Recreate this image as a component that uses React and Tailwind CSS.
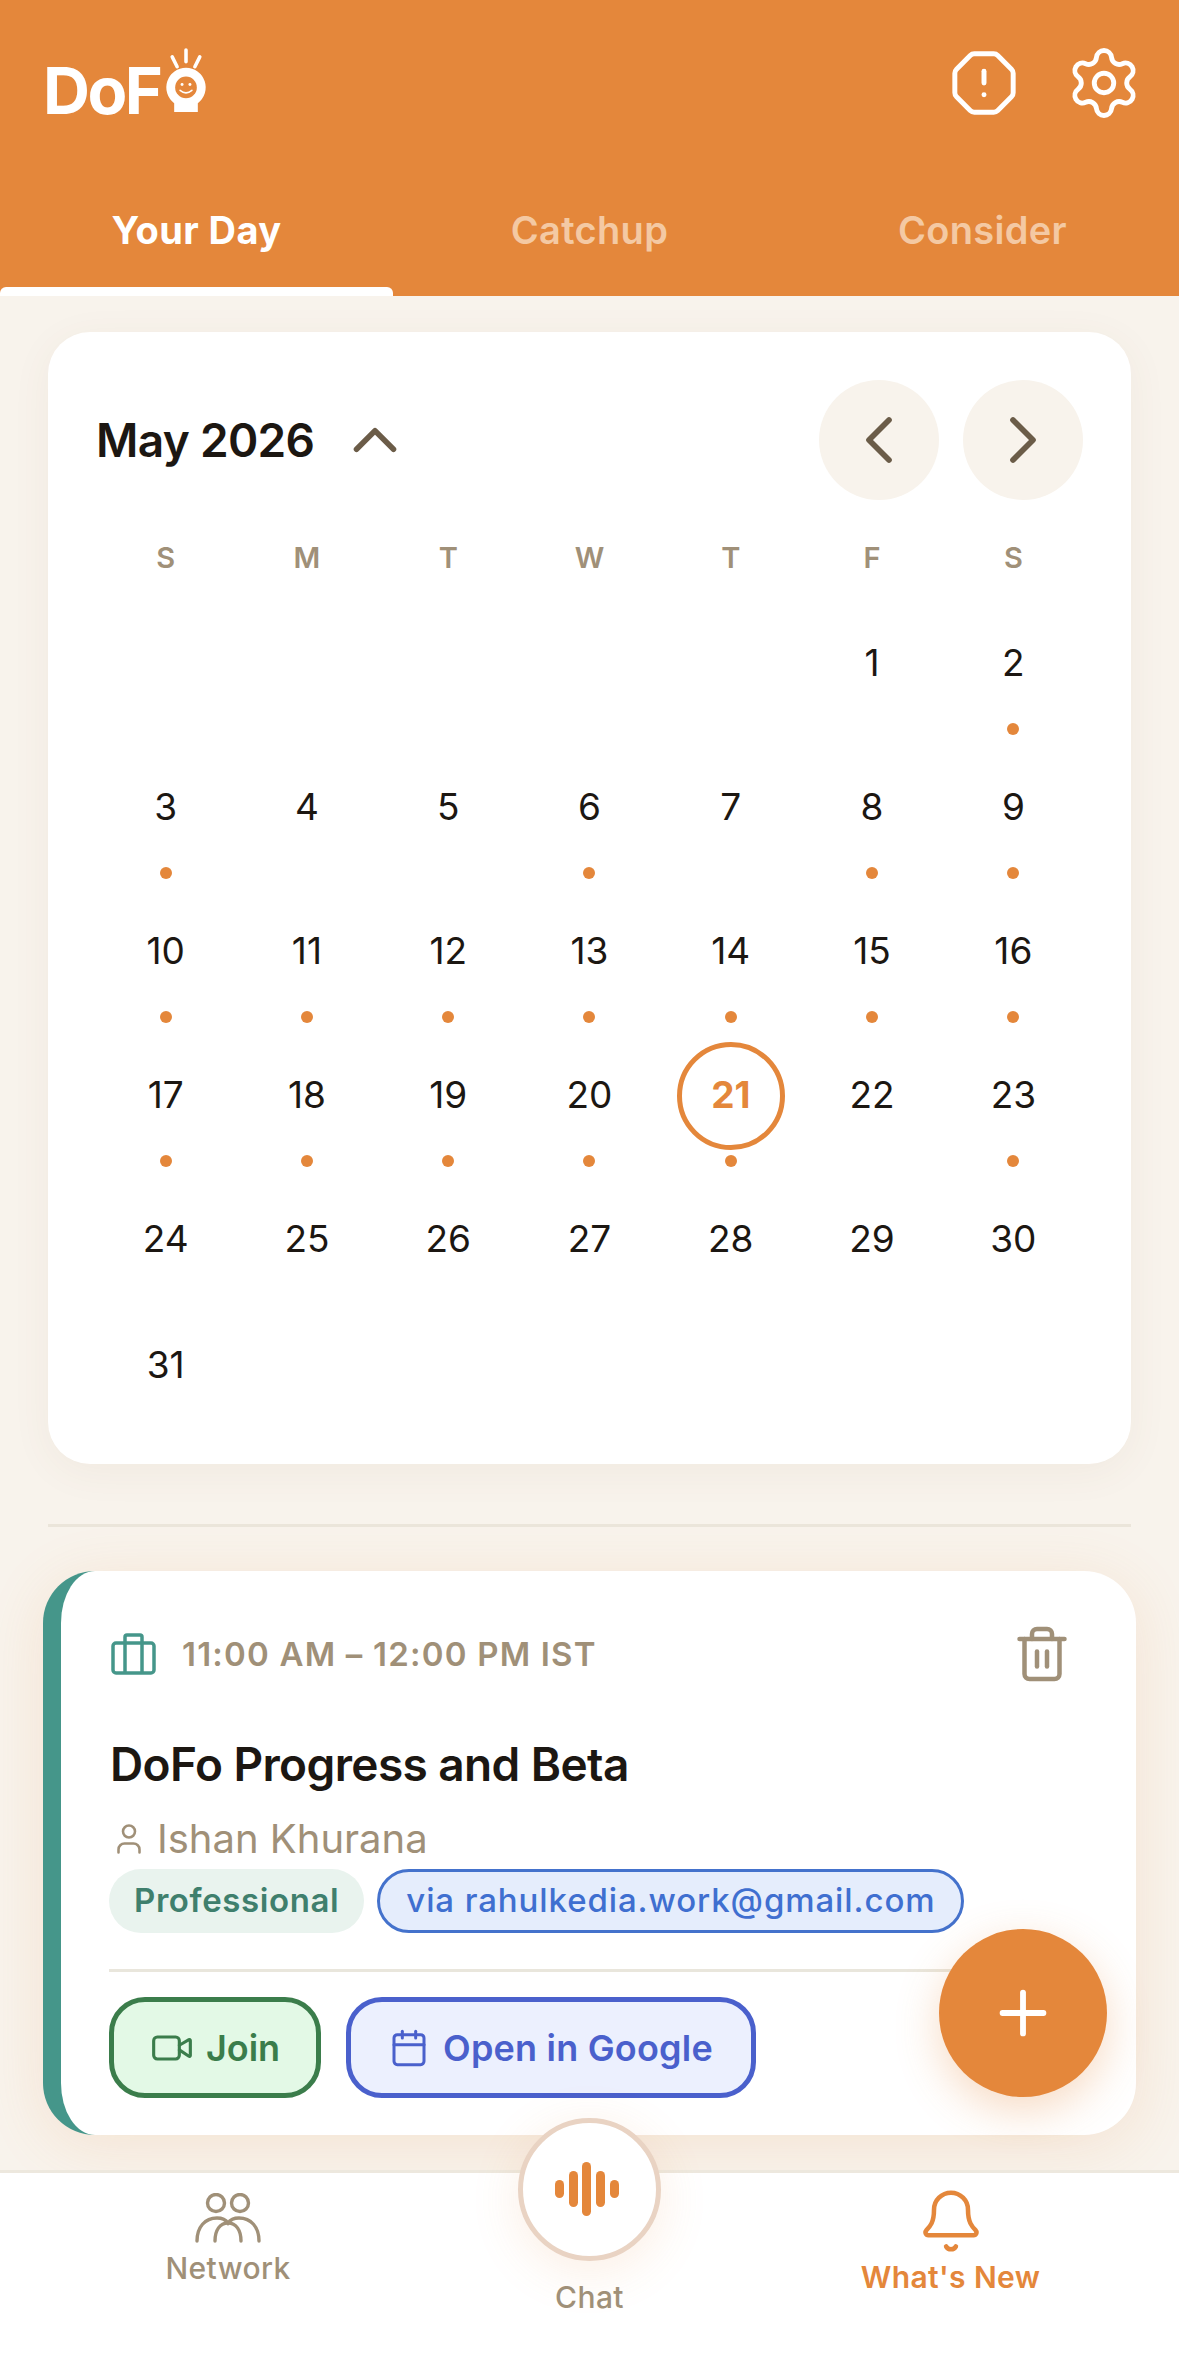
import { Bell, Calendar, ChevronLeft, ChevronRight, ChevronUp, OctagonAlert, Plus, Settings, Trash2, User, Video } from "lucide-react";

const days = [
  [null, null, null, null, null, 1, 2],
  [3, 4, 5, 6, 7, 8, 9],
  [10, 11, 12, 13, 14, 15, 16],
  [17, 18, 19, 20, 21, 22, 23],
];
const lastRows = [[24, 25, 26, 27, 28, 29, 30], [31, null, null, null, null, null, null]];
const noDot = [1, 4, 5, 7, 22];

function Logo() {
  return (
    <div className="flex items-end h-[66px]">
      <span className="text-[65px] leading-[60px] font-bold text-white tracking-[-2.5px] -mb-[5px] -ml-[1px] font-['Inter',sans-serif]">DoF</span>
      <svg width="48" height="65" viewBox="0 0 46 66" className="ml-[2px] mb-[3px]">
        <path d="M23 2v12M9 9l5 10M37 9l-5 10" stroke="#fff" strokeWidth="3.6" strokeLinecap="round" />
        <path d="M23 20a20 20 0 0 1 12 36v9H11v-9a20 20 0 0 1 12-36z" fill="#fff" />
        <circle cx="23" cy="40" r="11" fill="#e4873b" />
        <circle cx="19" cy="37" r="1.5" fill="#fff" />
        <circle cx="27" cy="37" r="1.5" fill="#fff" />
        <path d="M17 43q6 5 12 0" stroke="#fff" strokeWidth="1.6" fill="none" strokeLinecap="round" />
      </svg>
    </div>
  );
}

function Header() {
  return (
    <header className="bg-[#e4873b] h-[296px] shrink-0 flex flex-col">
      <div className="flex items-center justify-between pl-[44px] pr-[42px] pt-[42px] h-[170px] pb-[46px]">
        <Logo />
        <div className="flex items-center gap-[46px]">
          <OctagonAlert size={70} color="#fff" strokeWidth={1.7} />
          <Settings size={78} color="#fff" strokeWidth={1.5} className="-mr-[6px]" />
        </div>
      </div>
      <div className="grid grid-cols-3 flex-1">
        <div className="relative flex justify-center pt-[36px] text-[38px] leading-[48px] font-bold tracking-[0.4px] text-white">
          Your Day
          <div className="absolute left-0 right-0 bottom-0 h-[9px] bg-white rounded-t-[6px]" />
        </div>
        <div className="flex justify-center pt-[36px] text-[38px] leading-[48px] font-semibold tracking-[0.3px] text-[#f4c9a3]">Catchup</div>
        <div className="flex justify-center pt-[36px] text-[38px] leading-[48px] font-semibold tracking-[0.3px] text-[#f4c9a3]">Consider</div>
      </div>
    </header>
  );
}

function DayCell({ day }) {
  if (!day) return <div />;
  const today = day === 21;
  return (
    <div className="relative flex flex-col items-center">
      {today ? (
        <div className="absolute top-[-4px] w-[108px] h-[108px] rounded-full border-[5px] border-[#e4873b]" />
      ) : null}
      <div className={`h-[50px] leading-[50px] mt-[24px] text-[37px] ${today ? "font-bold text-[#e4873b]" : "text-[#1c1712]"}`}>{day}</div>
      {day < 24 && !noDot.includes(day) ? <div className="w-[12px] h-[12px] rounded-full bg-[#e4873b] mt-[35px]" /> : null}
    </div>
  );
}

function CalendarCard() {
  return (
    <section className="bg-white rounded-[42px] px-[47px] pt-[48px] h-[1132px] shadow-[0_8px_40px_rgba(120,90,50,0.06)]">
      <div className="flex items-center justify-between">
        <div className="flex items-center gap-[24px]">
          <span className="text-[46px] font-semibold tracking-[-0.7px] text-[#1c1712] leading-[56px] ml-[1px]">May 2026</span>
          <ChevronUp size={74} color="#6b5c48" strokeWidth={1.8} />
        </div>
        <div className="flex gap-[24px] mr-[1px]">
          <div className="w-[120px] h-[120px] rounded-full bg-[#f8f3ec] flex items-center justify-center">
            <ChevronLeft size={80} color="#6b5c48" strokeWidth={1.7} />
          </div>
          <div className="w-[120px] h-[120px] rounded-full bg-[#f8f3ec] flex items-center justify-center">
            <ChevronRight size={80} color="#6b5c48" strokeWidth={1.7} />
          </div>
        </div>
      </div>
      <div className="grid grid-cols-7 mt-[38px] text-[29px] leading-[40px] font-semibold text-[#a09078] text-center">
        {["S", "M", "T", "W", "T", "F", "S"].map((d, i) => (
          <div key={i}>{d}</div>
        ))}
      </div>
      <div className="grid grid-cols-7 auto-rows-[144px] mt-[36px]">
        {days.flat().map((d, i) => (
          <DayCell key={i} day={d} />
        ))}
      </div>
      <div className="grid grid-cols-7 auto-rows-[126px]">
        {lastRows.flat().map((d, i) => (
          <DayCell key={i} day={d} />
        ))}
      </div>
    </section>
  );
}

function EventCard() {
  return (
    <section className="-mx-[5px] bg-white rounded-[52px] border-l-[18px] border-[#45968a] h-[564px] pl-[50px] pr-[70px] pt-[53px] shadow-[0_10px_60px_rgba(228,135,59,0.14)]">
      <div className="flex items-center justify-between">
        <div className="flex items-center gap-[26px] text-[33px] font-semibold tracking-[1.2px] text-[#a09078] leading-[46px]">
          <svg width="45" height="42" viewBox="0 0 45 42" fill="none" stroke="#45968a" strokeWidth="3.5">
            <rect x="2" y="10" width="41" height="30" rx="3" />
            <path d="M14 10V4a2 2 0 0 1 2-2h13a2 2 0 0 1 2 2v6M14 10v30M31 10v30" />
          </svg>
          11:00 AM – 12:00 PM IST
        </div>
        <Trash2 size={60} color="#a09078" strokeWidth={1.8} className="-mr-[6px]" />
      </div>
      <h2 className="mt-[52px] -ml-[1px] text-[46px] leading-[56px] font-semibold tracking-[-0.6px] text-[#1c1712]">DoFo Progress and Beta</h2>
      <div className="mt-[22px] flex items-center gap-[10px] text-[40px] leading-[50px] text-[#a09078]">
        <User size={36} color="#a09078" strokeWidth={1.7} />
        Ishan Khurana
      </div>
      <div className="mt-[5px] flex items-center gap-[13px]">
        <div className="h-[64px] px-[25px] rounded-full bg-[#e9f3ee] text-[#3f7f6d] text-[33px] font-semibold tracking-[0.6px] flex items-center -ml-[2px]">Professional</div>
        <div className="h-[64px] px-[26px] rounded-full bg-[#e5edfc] border-[3px] border-[#4472cc] text-[#3f6fd0] text-[33px] font-medium tracking-[0.9px] flex items-center">via rahulkedia.work@gmail.com</div>
      </div>
      <div className="h-[3px] bg-[#e9e6dc] mt-[36px] -ml-[2px]" />
      <div className="mt-[25px] flex gap-[25px] -ml-[2px]">
        <div className="h-[101px] w-[212px] rounded-[36px] border-[5px] border-[#3b7d4b] bg-[#e3f9e6] text-[#3b7d4b] text-[36px] font-semibold flex items-center justify-center gap-[12px]">
          <Video size={44} color="#3b7d4b" strokeWidth={1.7} />
          Join
        </div>
        <div className="h-[101px] w-[410px] rounded-[36px] border-[5px] border-[#4a60cc] bg-[#ecf0fe] text-[#4a60cc] text-[36px] font-semibold tracking-[0.2px] flex items-center justify-center gap-[14px]">
          <Calendar size={40} color="#4a60cc" strokeWidth={1.8} />
          Open in Google
        </div>
      </div>
    </section>
  );
}

function BottomNav() {
  return (
    <nav className="relative h-[209px] shrink-0 bg-white border-t-[3px] border-[#ede8de] grid grid-cols-[456px_268px_1fr]">
      <div className="flex flex-col items-center pt-[20px]">
        <svg width="66" height="50" viewBox="0 0 66 50" fill="none" stroke="#a09078" strokeWidth="3.4" strokeLinecap="round">
          <ellipse cx="21" cy="10" rx="8.5" ry="8.5" />
          <ellipse cx="45" cy="10" rx="8.5" ry="8.5" />
          <path d="M2 48c0-14 8-23 20-23 6 0 9 2 11 5 2-3 5-5 11-5 12 0 20 9 20 23" />
          <path d="M20 48c0-11 5-18 13-18s13 7 13 18" />
        </svg>
        <span className="mt-[5px] text-[30px] leading-[40px] font-medium tracking-[0.4px] text-[#a09078]">Network</span>
      </div>
      <div className="flex flex-col items-center -mt-[55px] -ml-[1px]">
        <div className="w-[143px] h-[143px] rounded-full bg-white border-[5px] border-[#e9d3c3] flex items-center justify-center shadow-[0_10px_50px_rgba(228,135,59,0.14)]">
          <svg width="64" height="56" viewBox="0 0 64 56" fill="#e4873b" className="-ml-[6px]">
            <rect x="0" y="18" width="9" height="18" rx="4.5" />
            <rect x="14" y="9" width="9" height="36" rx="4.5" />
            <rect x="27" y="0" width="9" height="54" rx="4.5" />
            <rect x="41" y="9" width="9" height="36" rx="4.5" />
            <rect x="55" y="18" width="9" height="18" rx="4.5" />
          </svg>
        </div>
        <span className="mt-[16px] text-[30px] leading-[40px] font-medium tracking-[0.4px] text-[#a09078]">Chat</span>
      </div>
      <div className="flex flex-col items-center pt-[14px] -ml-[2px]">
        <Bell size={68} color="#e4873b" strokeWidth={1.6} />
        <span className="mt-[2px] text-[30px] leading-[40px] font-semibold tracking-[0.4px] text-[#e4873b]">What's New</span>
      </div>
    </nav>
  );
}

export default function App() {
  return (
    <div className="relative w-[1179px] h-[2379px] overflow-hidden bg-[#f8f3ec] flex flex-col font-['Inter',sans-serif]">
      <Header />
      <main className="flex-1 overflow-hidden px-[48px] pt-[36px]">
        <CalendarCard />
        <div className="h-[3px] bg-[#ebe5da] mt-[60px] mb-[44px]" />
        <EventCard />
      </main>
      <BottomNav />
      <div className="absolute left-[939px] top-[1929px] w-[168px] h-[168px] rounded-full bg-[#e4873b] flex items-center justify-center shadow-[0_14px_44px_rgba(228,135,59,0.3)]">
        <Plus size={70} color="#fff" strokeWidth={2} />
      </div>
    </div>
  );
}
